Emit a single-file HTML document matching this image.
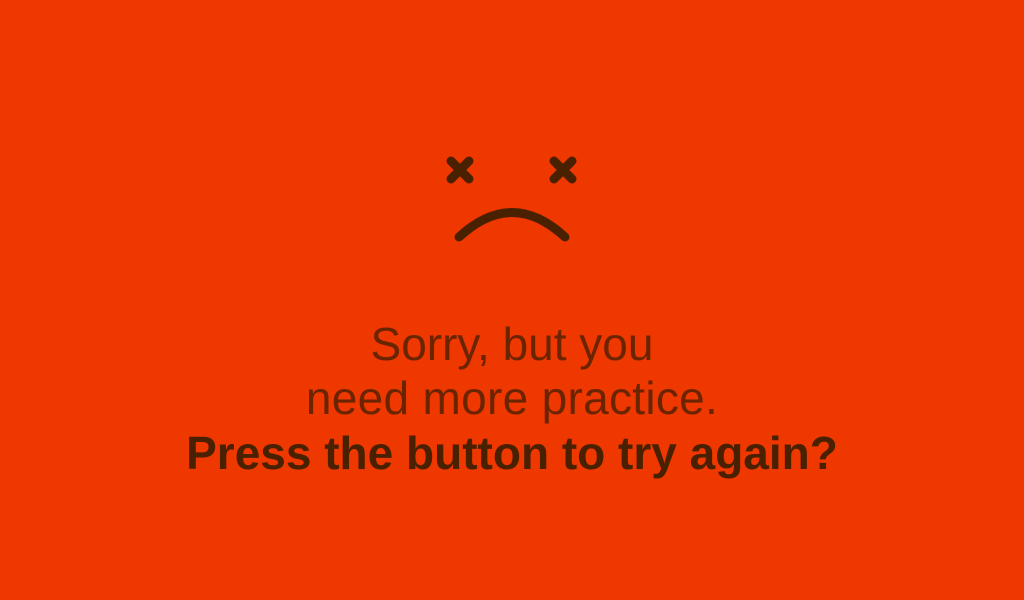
<!DOCTYPE html>
<html><head><meta charset="utf-8"><style>
html,body{margin:0;padding:0;width:1024px;height:600px;background:#ef3700;overflow:hidden}
.l{position:absolute;left:0;width:1024px;text-align:center;font-family:"Liberation Sans",sans-serif;font-size:46px;color:#4a2100;line-height:54px;white-space:nowrap}
.t{font-weight:normal;color:#6a2500}
.b{font-weight:bold}
</style></head><body>
<svg width="1024" height="600" style="position:absolute;left:0;top:0">
<g stroke="#4a2100" stroke-width="9" stroke-linecap="round" fill="none">
<path d="M451 161 L469 179 M469 161 L451 179"/>
<path d="M554 161 L572 179 M572 161 L554 179"/>
<path d="M459 237 Q512 188 565 237"/>
</g></svg>
<div class="l t" style="top:317px">Sorry, but you</div>
<div class="l t" style="top:371px;letter-spacing:0.3px">need more practice.</div>
<div class="l b" style="top:426px">Press the button to try again?</div>
</body></html>
